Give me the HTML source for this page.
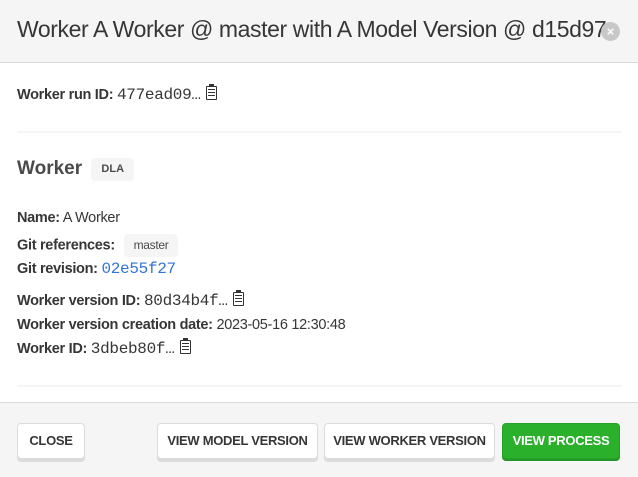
<!DOCTYPE html>
<html><head><style>
*{margin:0;padding:0;box-sizing:border-box}
body{width:638px;height:477px;overflow:hidden;font-family:"Liberation Sans",sans-serif;color:#363636;background:#fff;position:relative}
.a{position:absolute;white-space:nowrap}
.hdr{position:absolute;left:0;top:0;width:638px;height:63px;background:#f5f5f5;border-bottom:1px solid #dbdbdb}
.ftr{position:absolute;left:0;top:402px;width:638px;height:75px;background:#f5f5f5;border-top:1px solid #dbdbdb}
.t{font-size:14.5px;letter-spacing:-0.3px}
b{font-weight:bold}
.m{font-family:"Liberation Mono",monospace;font-size:16px;letter-spacing:-0.3px}
.tag{display:inline-block;background:#f5f5f5;border-radius:4px;font-size:12px;padding:0 10px;line-height:23px;color:#4a4a4a;vertical-align:middle}
.btn{position:absolute;top:423px;height:36px;background:#fff;border:1px solid #dbdbdb;border-radius:4px;box-shadow:0 3px 0 #dcdcdc;font-size:13px;font-weight:bold;text-align:center;line-height:34px;color:#363636;letter-spacing:-0.3px}
.hr{position:absolute;left:17px;width:604px;height:2px;background:#f5f5f5}
.clip{display:inline-block;width:11px;height:14px;border:1.5px solid #333;border-radius:1px;vertical-align:-1px;position:relative;background:repeating-linear-gradient(#fff 0 2px,#333 2px 3px);background-clip:content-box;padding:2px 1px;margin-left:2px}
.clip:before{content:"";position:absolute;left:1.5px;top:-3px;width:5px;height:3px;background:#333}
</style></head><body>
<div class="hdr"></div>
<div class="a" style="left:17px;top:16px;font-size:23px;color:#363636;letter-spacing:-0.4px">Worker A Worker @ master with A Model Version @ d15d97</div>
<div class="a" style="left:601px;top:22px;width:19px;height:19px;border-radius:50%;background:#c8c8c8;color:#fff;font-size:13px;font-weight:bold;text-align:center;line-height:19px">×</div>

<div class="a t" style="left:17px;top:86px"><b>Worker run ID:</b> <span class="m">477ead09…</span> <span class="clip"></span></div>
<div class="hr" style="top:131px"></div>
<div class="a" style="left:17px;top:158px;font-size:19px;font-weight:bold;color:#4a4a4a">Worker <span class="tag" style="font-weight:bold;margin-left:4px;vertical-align:2px;font-size:11px">DLA</span></div>

<div class="a t" style="left:17px;top:210px"><b>Name:</b> A Worker</div>
<div class="a t" style="left:17px;top:234px"><b>Git references:</b> <span class="tag" style="margin-left:5px">master</span></div>
<div class="a t" style="left:17px;top:260px"><b>Git revision:</b> <span class="m" style="color:#3273dc">02e55f27</span></div>
<div class="a t" style="left:17px;top:292px"><b>Worker version ID:</b> <span class="m">80d34b4f…</span> <span class="clip"></span></div>
<div class="a t" style="left:17px;top:317px"><b>Worker version creation date:</b> 2023-05-16 12:30:48</div>
<div class="a t" style="left:17px;top:340px"><b>Worker ID:</b> <span class="m">3dbeb80f…</span> <span class="clip"></span></div>
<div class="hr" style="top:385px"></div>

<div class="ftr"></div>
<div class="btn" style="left:17px;width:68px">CLOSE</div>
<div class="btn" style="left:157px;width:161px">VIEW MODEL VERSION</div>
<div class="btn" style="left:324px;width:171px">VIEW WORKER VERSION</div>
<div class="btn" style="left:502px;width:118px;background:#2bb02b;border-color:#26a226;color:#fff;box-shadow:0 2px 0 #23962a">VIEW PROCESS</div>
</body></html>
